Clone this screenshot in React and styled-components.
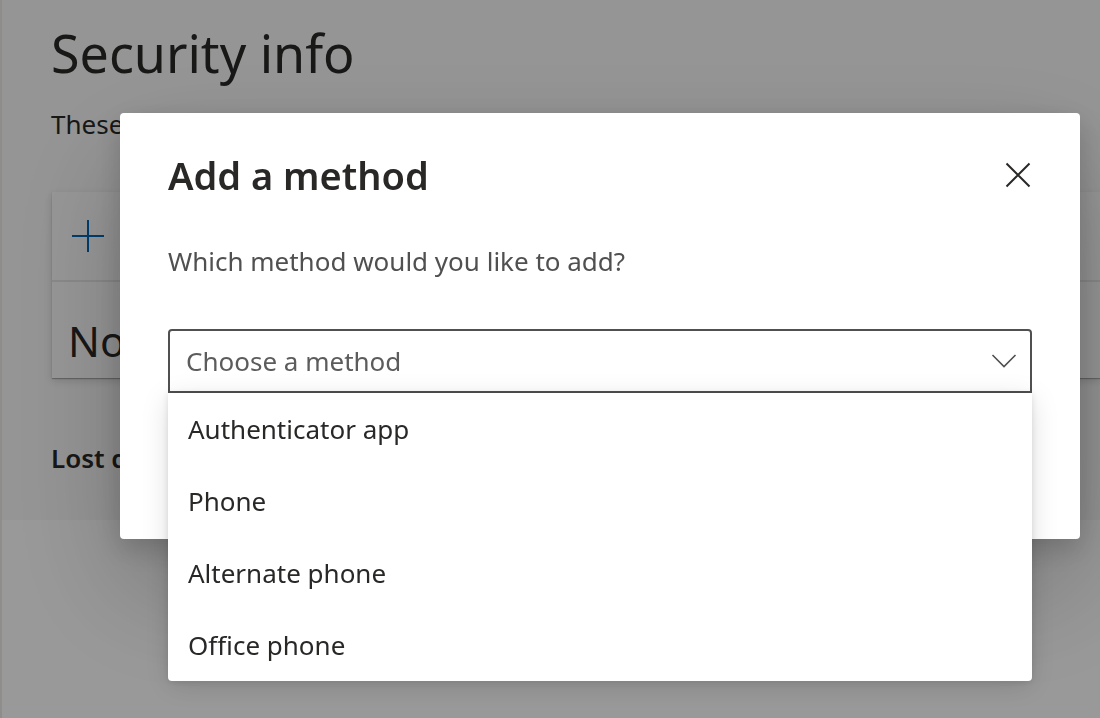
import React from "react";
import styled, { createGlobalStyle } from "styled-components";

const GlobalStyle = createGlobalStyle`
  *, *::before, *::after { box-sizing: border-box; }
  body {
    margin: 0;
    background: #ffffff;
    color: #292827;
    font-family: "Noto Sans", "Open Sans", sans-serif;
    font-size: 26px;
    line-height: 36px;
  }
  h1, h2, p, ul { margin: 0; padding: 0; }
  button, select { font: inherit; color: inherit; }
`;

const Page = styled.main`
  min-height: 100vh;
  border-left: 2px solid #edebe9;
`;

const Section = styled.section`
  padding: 17px 0 44px 49px;
  background: #f8f8f8;
`;

const PageTitle = styled.h1`
  font-size: 52px;
  font-weight: 400;
  line-height: 72px;
`;

const Intro = styled.p`
  margin-top: 17px;
`;

const Card = styled.div`
  margin: 50px 0 0 1px;
  background: #fcfcfc;
  box-shadow: 0 1px 1px rgba(0, 0, 0, 0.25), 0 3px 8px rgba(0, 0, 0, 0.14);
`;

const Toolbar = styled.div`
  display: flex;
  align-items: center;
  height: 90px;
  padding: 0 20px;
  border-bottom: 2px solid #e6e6e6;
`;

const AddButton = styled.button`
  display: flex;
  padding: 0;
  border: 0;
  background: none;
  color: #0067b8;
`;

const EmptyRow = styled.p`
  height: 96px;
  padding: 29px 16px 0;
  font-size: 42px;
  line-height: 60px;
`;

const LostDevice = styled.p`
  margin-top: 62px;
  font-weight: 600;
`;

const Overlay = styled.div`
  position: fixed;
  inset: 0;
  display: flex;
  align-items: flex-start;
  padding: 113px 20px 0 120px;
  background: rgba(0, 0, 0, 0.4);
`;

const Dialog = styled.div`
  flex: 1;
  min-width: 0;
  padding: 32px 48px 146px;
  border-radius: 4px;
  background: #ffffff;
  box-shadow: 0 51px 115px rgba(0, 0, 0, 0.22), 0 10px 29px rgba(0, 0, 0, 0.18);
`;

const DialogHeader = styled.header`
  display: flex;
  align-items: center;
  justify-content: space-between;
  height: 60px;
`;

const DialogTitle = styled.h2`
  font-size: 38px;
  font-weight: 600;
  line-height: 60px;
`;

const CloseButton = styled.button`
  display: flex;
  padding: 0;
  border: 0;
  background: none;
`;

const Question = styled.label`
  display: block;
  margin: 38px 0 50px;
  color: #505050;
`;

const Picker = styled.div`
  position: relative;
`;

const Select = styled.select`
  display: block;
  width: 100%;
  height: 64px;
  padding: 0 16px;
  border: 2px solid #505050;
  border-radius: 4px 4px 0 0;
  background: #ffffff;
  color: #5c5c5c;
  appearance: none;
  outline: none;
`;

const Chevron = styled.svg`
  position: absolute;
  top: 24px;
  right: 15px;
  color: #505050;
  pointer-events: none;
`;

const Menu = styled.div`
  position: absolute;
  top: 100%;
  left: 0;
  right: 0;
  border-radius: 0 0 4px 4px;
  background: #ffffff;
  box-shadow: 0 6px 28px rgba(0, 0, 0, 0.13), 0 1px 7px rgba(0, 0, 0, 0.11);
`;

const MenuOption = styled.button`
  display: block;
  width: 100%;
  height: 72px;
  padding: 0 20px;
  border: 0;
  background: none;
  text-align: left;
`;

const methods = ["Authenticator app", "Phone", "Alternate phone", "Office phone"];

export default function App() {
  return (
    <>
      <GlobalStyle />
      <Page>
        <Section>
          <PageTitle>Security info</PageTitle>
          <Intro>These</Intro>
          <Card>
            <Toolbar>
              <AddButton type="button" aria-label="Add">
                <svg width="32" height="32" viewBox="0 0 32 32" fill="none" stroke="currentColor" strokeWidth="2">
                  <path d="M16 0V32M0 16H32" />
                </svg>
              </AddButton>
            </Toolbar>
            <EmptyRow>No</EmptyRow>
          </Card>
          <LostDevice>Lost d</LostDevice>
        </Section>
      </Page>
      <Overlay>
        <Dialog role="dialog" aria-modal="true" aria-labelledby="dialog-title">
          <DialogHeader>
            <DialogTitle id="dialog-title">Add a method</DialogTitle>
            <CloseButton type="button" aria-label="Close">
              <svg width="28" height="28" viewBox="0 0 28 28" fill="none" stroke="currentColor" strokeWidth="2">
                <path d="M2.5 2.5L25.5 25.5M25.5 2.5L2.5 25.5" />
              </svg>
            </CloseButton>
          </DialogHeader>
          <Question htmlFor="method">Which method would you like to add?</Question>
          <Picker>
            <Select id="method" defaultValue="">
              <option value="">Choose a method</option>
            </Select>
            <Chevron width="26" height="16" viewBox="0 0 26 16" fill="none" stroke="currentColor" strokeWidth="1.6">
              <path d="M1.5 2L13 13.5L24.5 2" />
            </Chevron>
            <Menu role="listbox" aria-label="Methods">
              {methods.map((method) => (
                <MenuOption key={method} type="button" role="option" aria-selected="false">
                  {method}
                </MenuOption>
              ))}
            </Menu>
          </Picker>
        </Dialog>
      </Overlay>
    </>
  );
}
